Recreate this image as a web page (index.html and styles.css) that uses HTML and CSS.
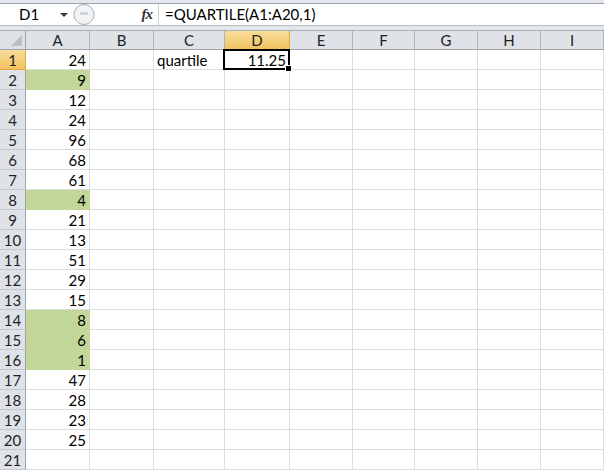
FILE: index.html
```html
<!DOCTYPE html>
<html lang="en">
<head>
  <meta charset="UTF-8">
  <title>QUARTILE</title>
  <link rel="stylesheet" href="styles.css">
</head>
<body>
  <div class="top">
    <div class="fbar">
      <div class="namebox">D1<span class="arrow"></span></div>
      <div class="mid">
        <svg class="knob" width="24" height="21" viewBox="0 0 24 21">
          <circle cx="12" cy="10.5" r="10" fill="#f1f3f5" stroke="#aab0b8"/>
          <path d="M8 9.5h8" stroke="#c3c8cf" stroke-width="2"/>
        </svg>
        <span class="fx">fx</span>
      </div>
      <div class="formula">=QUARTILE(A1:A20,1)</div>
    </div>
  </div>

  <div class="sheet">
    <div class="row head">
      <div class="corner"><span class="tri"></span></div>
      <div class="ch">A</div><div class="ch">B</div><div class="ch">C</div><div class="ch on">D</div><div class="ch">E</div><div class="ch">F</div><div class="ch">G</div><div class="ch">H</div><div class="ch">I</div>
    </div>
    <div class="row"><div class="rh on">1</div><div class="c n">24</div><div class="c"></div><div class="c">quartile</div><div class="c n sel">11.25</div><div class="c"></div><div class="c"></div><div class="c"></div><div class="c"></div><div class="c"></div></div>
    <div class="row"><div class="rh">2</div><div class="c n hl">9</div><div class="c"></div><div class="c"></div><div class="c"></div><div class="c"></div><div class="c"></div><div class="c"></div><div class="c"></div><div class="c"></div></div>
    <div class="row"><div class="rh">3</div><div class="c n">12</div><div class="c"></div><div class="c"></div><div class="c"></div><div class="c"></div><div class="c"></div><div class="c"></div><div class="c"></div><div class="c"></div></div>
    <div class="row"><div class="rh">4</div><div class="c n">24</div><div class="c"></div><div class="c"></div><div class="c"></div><div class="c"></div><div class="c"></div><div class="c"></div><div class="c"></div><div class="c"></div></div>
    <div class="row"><div class="rh">5</div><div class="c n">96</div><div class="c"></div><div class="c"></div><div class="c"></div><div class="c"></div><div class="c"></div><div class="c"></div><div class="c"></div><div class="c"></div></div>
    <div class="row"><div class="rh">6</div><div class="c n">68</div><div class="c"></div><div class="c"></div><div class="c"></div><div class="c"></div><div class="c"></div><div class="c"></div><div class="c"></div><div class="c"></div></div>
    <div class="row"><div class="rh">7</div><div class="c n">61</div><div class="c"></div><div class="c"></div><div class="c"></div><div class="c"></div><div class="c"></div><div class="c"></div><div class="c"></div><div class="c"></div></div>
    <div class="row"><div class="rh">8</div><div class="c n hl">4</div><div class="c"></div><div class="c"></div><div class="c"></div><div class="c"></div><div class="c"></div><div class="c"></div><div class="c"></div><div class="c"></div></div>
    <div class="row"><div class="rh">9</div><div class="c n">21</div><div class="c"></div><div class="c"></div><div class="c"></div><div class="c"></div><div class="c"></div><div class="c"></div><div class="c"></div><div class="c"></div></div>
    <div class="row"><div class="rh">10</div><div class="c n">13</div><div class="c"></div><div class="c"></div><div class="c"></div><div class="c"></div><div class="c"></div><div class="c"></div><div class="c"></div><div class="c"></div></div>
    <div class="row"><div class="rh">11</div><div class="c n">51</div><div class="c"></div><div class="c"></div><div class="c"></div><div class="c"></div><div class="c"></div><div class="c"></div><div class="c"></div><div class="c"></div></div>
    <div class="row"><div class="rh">12</div><div class="c n">29</div><div class="c"></div><div class="c"></div><div class="c"></div><div class="c"></div><div class="c"></div><div class="c"></div><div class="c"></div><div class="c"></div></div>
    <div class="row"><div class="rh">13</div><div class="c n">15</div><div class="c"></div><div class="c"></div><div class="c"></div><div class="c"></div><div class="c"></div><div class="c"></div><div class="c"></div><div class="c"></div></div>
    <div class="row"><div class="rh">14</div><div class="c n hl">8</div><div class="c"></div><div class="c"></div><div class="c"></div><div class="c"></div><div class="c"></div><div class="c"></div><div class="c"></div><div class="c"></div></div>
    <div class="row"><div class="rh">15</div><div class="c n hl">6</div><div class="c"></div><div class="c"></div><div class="c"></div><div class="c"></div><div class="c"></div><div class="c"></div><div class="c"></div><div class="c"></div></div>
    <div class="row"><div class="rh">16</div><div class="c n hl">1</div><div class="c"></div><div class="c"></div><div class="c"></div><div class="c"></div><div class="c"></div><div class="c"></div><div class="c"></div><div class="c"></div></div>
    <div class="row"><div class="rh">17</div><div class="c n">47</div><div class="c"></div><div class="c"></div><div class="c"></div><div class="c"></div><div class="c"></div><div class="c"></div><div class="c"></div><div class="c"></div></div>
    <div class="row"><div class="rh">18</div><div class="c n">28</div><div class="c"></div><div class="c"></div><div class="c"></div><div class="c"></div><div class="c"></div><div class="c"></div><div class="c"></div><div class="c"></div></div>
    <div class="row"><div class="rh">19</div><div class="c n">23</div><div class="c"></div><div class="c"></div><div class="c"></div><div class="c"></div><div class="c"></div><div class="c"></div><div class="c"></div><div class="c"></div></div>
    <div class="row"><div class="rh">20</div><div class="c n">25</div><div class="c"></div><div class="c"></div><div class="c"></div><div class="c"></div><div class="c"></div><div class="c"></div><div class="c"></div><div class="c"></div></div>
    <div class="row"><div class="rh">21</div><div class="c"></div><div class="c"></div><div class="c"></div><div class="c"></div><div class="c"></div><div class="c"></div><div class="c"></div><div class="c"></div><div class="c"></div></div>
  </div>
</body>
</html>
```

FILE: styles.css
```css
* {
  box-sizing: border-box;
}

body {
  margin: 0;
  width: 604px;
  height: 470px;
  overflow: hidden;
  background-color: #ffffff;
  font-family: Lato, 'Open Sans', sans-serif;
  font-size: 15px;
  color: #000000;
}

.top {
  height: 30px;
  padding-top: 3px;
  background-color: #e3e7ec;
}

.fbar {
  display: flex;
  height: 23px;
  background-color: #ffffff;
  border-top: 1px solid #9da3aa;
  border-bottom: 1px solid #b5bbc2;
}

.namebox {
  position: relative;
  width: 72px;
  padding-left: 19px;
  line-height: 21px;
}

.arrow {
  position: absolute;
  left: 60px;
  top: 9px;
  border-left: 4px solid transparent;
  border-right: 4px solid transparent;
  border-top: 4px solid #3a3a3a;
}

.mid {
  display: flex;
  align-items: center;
  justify-content: space-between;
  width: 86px;
  padding-right: 6px;
  background-color: #ffffff;
}

.fx {
  font-family: 'Liberation Serif', serif;
  font-style: italic;
  font-weight: bold;
  font-size: 15px;
  color: #333333;
  letter-spacing: -1px;
}

.formula {
  flex: 1;
  padding-left: 6px;
  line-height: 21px;
  border-left: 1px solid #d2d6dc;
}

.sheet {
  width: 604px;
}

.row {
  display: grid;
  grid-template-columns: 26px 64px 64px 71px 65px 63px 62px 63px 63px 63px;
  height: 20px;
}

.c {
  height: 20px;
  padding: 0 3px;
  line-height: 20px;
  border-right: 1px solid #dadcdd;
  border-bottom: 1px solid #dadcdd;
  white-space: nowrap;
}

.n {
  text-align: right;
}

.hl {
  background-color: #c4d79b;
  border-color: #c4d79b;
}

.sel {
  position: relative;
}

.sel::after {
  content: "";
  position: absolute;
  left: -2px;
  top: -1px;
  right: -1px;
  bottom: -1px;
  border: 2px solid #000000;
}

.sel::before {
  content: "";
  position: absolute;
  right: -3px;
  bottom: -3px;
  width: 5px;
  height: 5px;
  background-color: #000000;
  border: 1px solid #ffffff;
  z-index: 1;
}

.head {
  border-top: 1px solid #a9afb6;
  height: 20px;
}

.head .ch,
.head .corner {
  height: 19px;
}

.ch {
  text-align: center;
  line-height: 19px;
  color: #222222;
  background-color: #dfe3e8;
  border-right: 1px solid #aeb4bb;
  border-bottom: 1px solid #9ea4ab;
}

.corner {
  position: relative;
  background-color: #dfe3e8;
  border-right: 1px solid #9ea4ab;
  border-bottom: 1px solid #9ea4ab;
}

.tri {
  position: absolute;
  right: 3px;
  bottom: 3px;
  border-left: 11px solid transparent;
  border-bottom: 11px solid #b9bfc6;
}

.rh {
  height: 20px;
  text-align: center;
  line-height: 20px;
  color: #222222;
  background-color: #dfe3e8;
  border-right: 1px solid #9ea4ab;
  border-bottom: 1px solid #c3c8cf;
}

.on {
  background: linear-gradient(#f9dc9c, #f1c35f);
  border-right-color: #e3a93d;
  border-bottom-color: #e3a93d;
}
```
